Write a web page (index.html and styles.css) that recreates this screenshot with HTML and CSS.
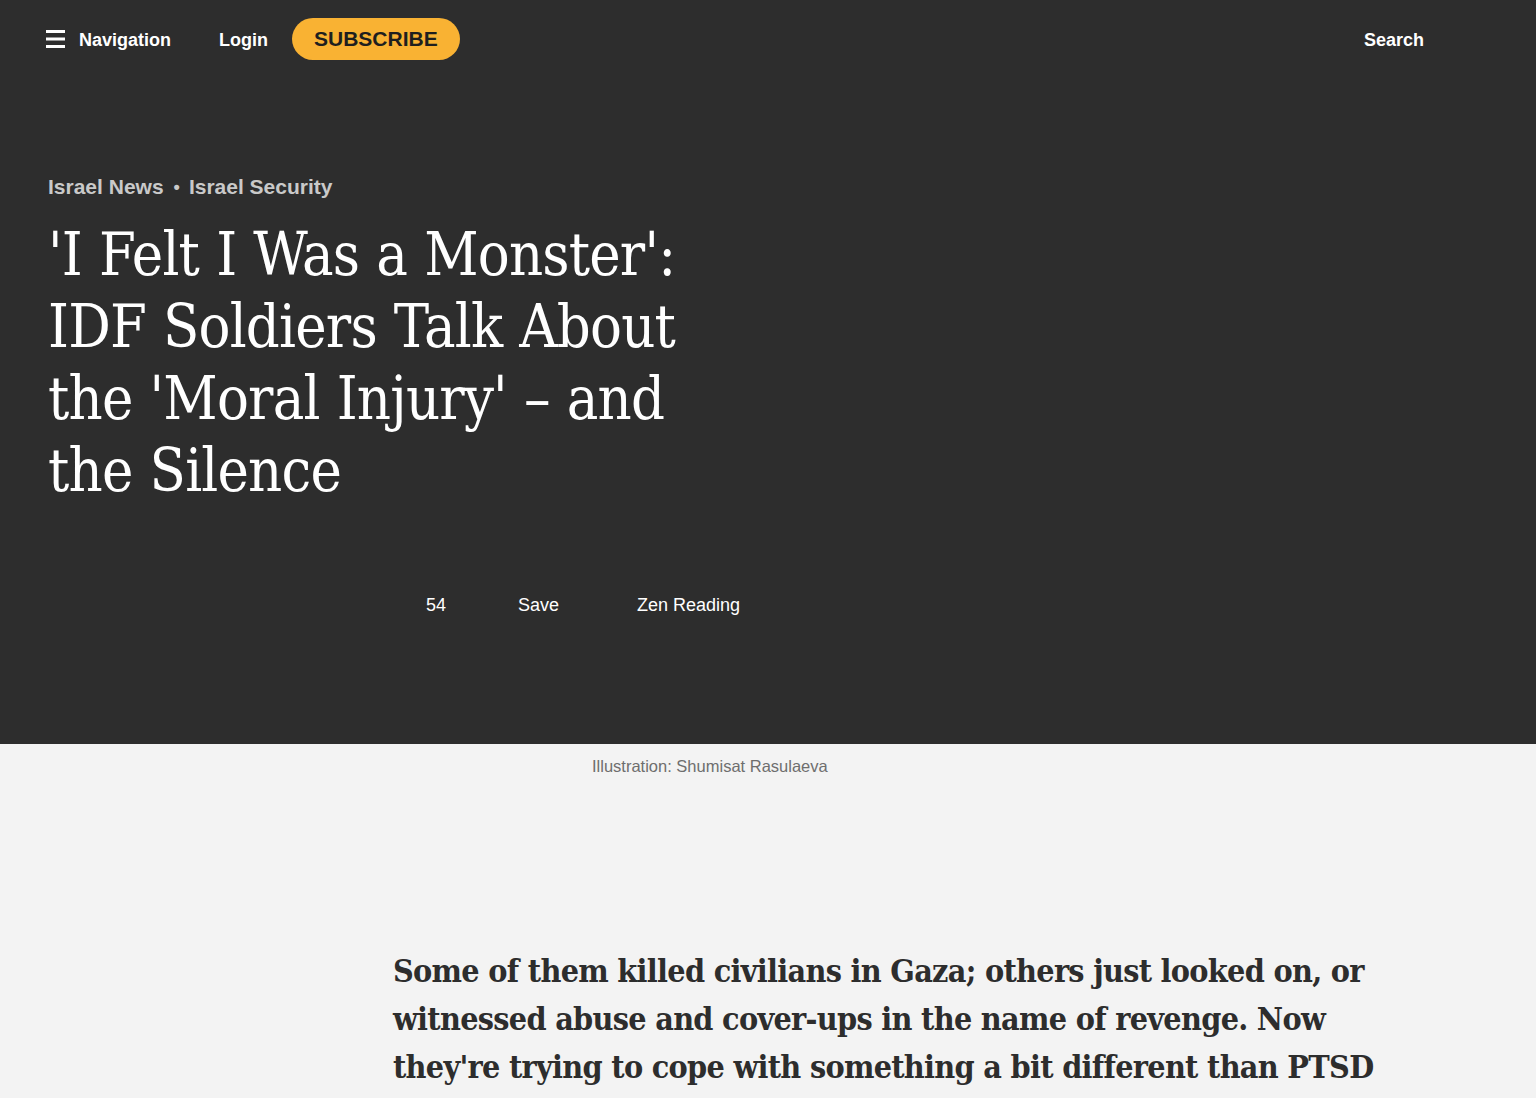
FILE: index.html
```html
<!DOCTYPE html>
<html lang="en">
<head>
<meta charset="utf-8">
<title>Haaretz</title>
<link rel="stylesheet" href="styles.css">
</head>
<body>
<div class="hero">
  <header class="topbar">
    <div class="left">
      <a class="nav-btn" href="#">
        <svg class="burger" width="19" height="18" viewBox="0 0 19 18"><rect x="0" y="0" width="19" height="3" fill="#fff"/><rect x="0" y="7.5" width="19" height="3" fill="#fff"/><rect x="0" y="15" width="19" height="3" fill="#fff"/></svg>
        <span>Navigation</span>
      </a>
      <a class="login" href="#">Login</a>
      <a class="subscribe" href="#">SUBSCRIBE</a>
    </div>
    <a class="search" href="#">Search</a>
  </header>
  <div class="headline">
    <div class="crumbs"><span>Israel News</span><span class="dot">•</span><span>Israel Security</span></div>
    <h1>'I Felt I Was a Monster': IDF Soldiers Talk About the 'Moral Injury' – and the Silence</h1>
  </div>
  <div class="actions">
    <span class="act count">54</span>
    <span class="act save">Save</span>
    <span class="act zen">Zen Reading</span>
  </div>
</div>
<div class="caption">Illustration: Shumisat Rasulaeva</div>
<p class="subtitle">Some of them killed civilians in Gaza; others just looked on, or witnessed abuse and cover-ups in the name of revenge. Now they're trying to cope with something a bit different than PTSD</p>
</body>
</html>
```
FILE: styles.css
```css
* { box-sizing: border-box; }
html, body { margin: 0; padding: 0; }
body {
  background: #f3f3f3;
  font-family: "Liberation Sans", Arial, sans-serif;
  overflow: hidden;
  height: 1098px;
}
a { color: inherit; text-decoration: none; }
.hero {
  background: #2d2d2d;
  height: 744px;
  color: #fff;
  display: flex;
  flex-direction: column;
}
.topbar {
  height: 78px;
  display: flex;
  align-items: center;
  justify-content: space-between;
  padding: 0 112px 0 46px;
}
.left { display: flex; align-items: center; }
.nav-btn { display: flex; align-items: center; font-weight: 700; font-size: 18px; padding-top: 2px; }
.burger { margin-right: 14px; margin-top: -2px; }
.login { font-weight: 700; font-size: 18px; margin-left: 48px; padding-top: 2px; }
.subscribe {
  margin-left: 24px;
  background: #f9b233;
  color: #1f1f1f;
  font-weight: 700;
  font-size: 21px;
  height: 42px;
  line-height: 42px;
  padding: 0 22px;
  border-radius: 21px;
}
.search { font-weight: 700; font-size: 18px; padding-top: 2px; }
.headline { padding: 97px 48px 0; }
.crumbs {
  font-weight: 700;
  font-size: 21px;
  color: #c9c9c9;
  display: flex;
  align-items: center;
  height: 24px;
}
.dot { margin: 0 9px 0 10px; font-size: 18px; }
h1 {
  margin: 20px 0 0;
  width: 700px;
  font-family: "DejaVu Serif Condensed", "DejaVu Serif", "Liberation Serif", serif;
  font-stretch: condensed;
  font-weight: 400;
  font-size: 59px;
  line-height: 72px;
  letter-spacing: -0.8px;
  word-spacing: 1px;
  color: #fff;
}
.actions {
  margin-top: 88px;
  display: flex;
  align-items: center;
  padding-left: 426px;
  font-size: 18px;
  color: #fff;
}
.count { width: 92px; }
.save { width: 119px; }
.caption {
  padding-left: 592px;
  margin-top: 13px;
  font-size: 16.5px;
  color: #6e6e6e;
  line-height: 18px;
}
.subtitle {
  margin: 172px 0 0 393px;
  width: 1000px;
  font-family: "DejaVu Serif Condensed", "DejaVu Serif", "Liberation Serif", serif;
  font-stretch: condensed;
  font-weight: 700;
  font-size: 32px;
  line-height: 48px;
  color: #2d2d2d;
  letter-spacing: -0.7px;
}
```
